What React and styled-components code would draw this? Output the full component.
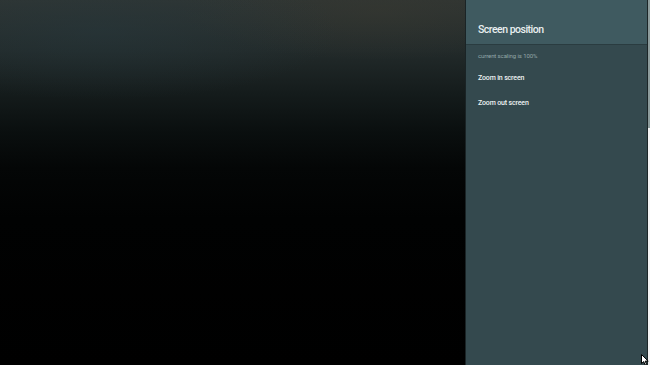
import React from "react";
import styled, { createGlobalStyle } from "styled-components";

const Global = createGlobalStyle`
    html, body { margin: 0; padding: 0; background: #000; }
    body { font-family: Roboto, "Liberation Sans", sans-serif; }
`;

const Screen = styled.div`
    position: relative;
    width: 650px;
    height: 365px;
    display: flex;
    overflow: hidden;
    background: #000;
`;

const Backdrop = styled.div`
    flex: 1;
    background:
        radial-gradient(ellipse 240px 70px at 100px 30px, rgba(38, 56, 62, 0.5), transparent),
        radial-gradient(ellipse 200px 50px at 380px 10px, rgba(56, 56, 48, 0.5), transparent),
        linear-gradient(180deg, #2f3533 0%, #222a2a 14%, #141b1b 26%, #0a0f0f 36%, #040606 46%, #010202 60%, #000 100%);
`;

const Panel = styled.aside`
    width: 181px;
    display: flex;
    flex-direction: column;
    background: #34494e;
    border-left: 1px solid #1a2426;
`;

const Header = styled.div`
    height: 45px;
    display: flex;
    align-items: center;
    padding: 15px 0 0 12px;
    box-sizing: border-box;
    background: #3f5a60;
    border-bottom: 1px solid #2a3c40;
    color: #e9f0f0;
    font-size: 10.5px;
    font-weight: 500;
    letter-spacing: -0.5px;
`;

const Body = styled.div`
    display: flex;
    flex-direction: column;
    padding: 5px 0 0 12px;
`;

const Caption = styled.div`
    color: #93a6a8;
    font-size: 6px;
    height: 12px;
    line-height: 12px;
    letter-spacing: -0.1px;
`;

const Item = styled.div`
    color: #eef3f3;
    font-size: 7px;
    font-weight: 500;
    height: 25px;
    line-height: 25px;
    letter-spacing: -0.15px;
    margin-top: ${(p) => (p.first ? "4px" : "0")};
`;

const Edge = styled.div`
    width: 3px;
    display: flex;
    flex-direction: column;
    border-left: 1px solid #1c2628;
    box-sizing: border-box;
`;

const EdgeTop = styled.div`
    height: 128px;
    background: #8d9c9c;
`;

const EdgeRest = styled.div`
    flex: 1;
    background: #f4f4f4;
`;

const Cursor = styled.svg`
    position: absolute;
    left: 641px;
    top: 354px;
`;

export default function App() {
    return (
        <>
            <Global />
            <Screen>
                <Backdrop />
                <Panel>
                    <Header>Screen position</Header>
                    <Body>
                        <Caption>current scaling is 100%</Caption>
                        <Item first>Zoom in screen</Item>
                        <Item>Zoom out screen</Item>
                    </Body>
                </Panel>
                <Edge>
                    <EdgeTop />
                    <EdgeRest />
                </Edge>
                <Cursor width="8" height="12" viewBox="0 0 8 12">
                    <path d="M0.5 0.5 L0.5 9.5 L2.7 7.6 L4.2 11 L5.6 10.4 L4.2 7.1 L7.2 7.1 Z" fill="#fff" stroke="#000" strokeWidth="1" />
                </Cursor>
            </Screen>
        </>
    );
}
